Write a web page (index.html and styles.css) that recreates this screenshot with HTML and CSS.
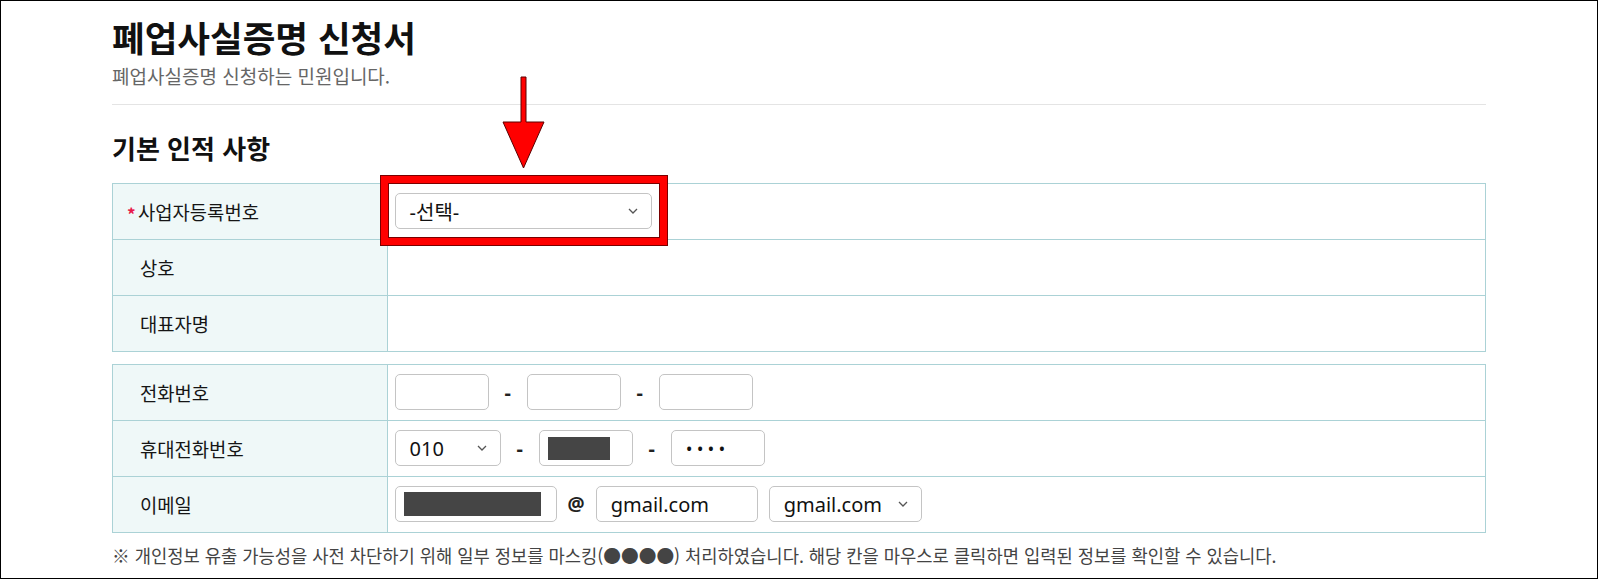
FILE: index.html
```html
<!DOCTYPE html>
<html lang="ko">
<head>
<meta charset="utf-8">
<title>폐업사실증명 신청서</title>
<link rel="stylesheet" href="styles.css">
</head>
<body>
<div class="frame">
  <div class="page">
    <h1 class="title">폐업사실증명 신청서</h1>
    <p class="desc">폐업사실증명 신청하는 민원입니다.</p>
    <hr class="rule">
    <h2 class="section">기본 인적 사항</h2>

    <table class="form-table">
      <tr>
        <th class="label"><span class="req">*</span>사업자등록번호</th>
        <td class="value">
          <div class="inline">
            <div class="field select w-biz"><span>-선택-</span><svg class="chev" viewBox="0 0 10 6"><path d="M1 1 L5 5 L9 1"/></svg></div>
          </div>
        </td>
      </tr>
      <tr>
        <th class="label">상호</th>
        <td class="value"><div class="inline"></div></td>
      </tr>
      <tr>
        <th class="label">대표자명</th>
        <td class="value"><div class="inline"></div></td>
      </tr>
    </table>

    <table class="form-table second">
      <tr>
        <th class="label">전화번호</th>
        <td class="value">
          <div class="inline">
            <div class="field w-tel"></div>
            <span class="dash">-</span>
            <div class="field w-tel"></div>
            <span class="dash">-</span>
            <div class="field w-tel"></div>
          </div>
        </td>
      </tr>
      <tr>
        <th class="label">휴대전화번호</th>
        <td class="value">
          <div class="inline">
            <div class="field select w-mob"><span>010</span><svg class="chev" viewBox="0 0 10 6"><path d="M1 1 L5 5 L9 1"/></svg></div>
            <span class="dash">-</span>
            <div class="field masked w-tel"><span class="mask mask-mid"></span></div>
            <span class="dash">-</span>
            <div class="field w-tel"><span class="dots">••••</span></div>
          </div>
        </td>
      </tr>
      <tr>
        <th class="label">이메일</th>
        <td class="value">
          <div class="inline email">
            <div class="field masked w-mail"><span class="mask mask-mail"></span></div>
            <span class="at">@</span>
            <div class="field w-mail"><span>gmail.com</span></div>
            <div class="field select w-msel"><span>gmail.com</span><svg class="chev" viewBox="0 0 10 6"><path d="M1 1 L5 5 L9 1"/></svg></div>
          </div>
        </td>
      </tr>
    </table>

    <p class="note">※ 개인정보 유출 가능성을 사전 차단하기 위해 일부 정보를 마스킹(●●●●) 처리하였습니다. 해당 칸을 마우스로 클릭하면 입력된 정보를 확인할 수 있습니다.</p>
  </div>

  <div class="highlight"></div>
  <svg class="arrow" viewBox="0 0 48 98" width="48" height="98">
    <polygon points="21,3 26,3 26,48 44,48 23.5,94 3,48 21,48"/>
  </svg>
</div>
</body>
</html>
```

FILE: styles.css
```css
* { box-sizing: border-box; }

html, body {
  margin: 0;
  padding: 0;
  background: #ffffff;
}

body {
  font-family: "Noto Sans CJK KR", "Noto Sans", sans-serif;
  color: #111;
}

.frame {
  position: relative;
  width: 1598px;
  height: 579px;
  border: 1px solid #000;
  overflow: hidden;
  background: #fff;
}

.page {
  width: 1374px;
  margin: 0 auto;
  padding-top: 16px;
}

.title {
  margin: 0;
  font-size: 35.5px;
  line-height: 40px;
  font-weight: 700;
  color: #111;
}

.desc {
  margin: 7px 0 0;
  font-size: 19px;
  line-height: 24px;
  color: #666;
}

.rule {
  margin: 16px 0 0;
  border: 0;
  border-top: 1px solid #e4e4e4;
  height: 0;
}

.section {
  margin: 27px 0 0;
  font-size: 26px;
  line-height: 32px;
  font-weight: 700;
  color: #111;
}

.form-table {
  width: 100%;
  margin-top: 19px;
  border-collapse: collapse;
  border: 1px solid #abd2d6;
}

.form-table.second {
  margin-top: 12px;
}

.form-table th,
.form-table td {
  border: 1px solid #abd2d6;
}

.label {
  width: 20%;
  background: #eff8f8;
  text-align: left;
  font-weight: 400;
  font-size: 18.8px;
  color: #151515;
  padding: 0 0 0 27px;
  vertical-align: middle;
}

.req {
  display: inline-block;
  width: 11px;
  margin-left: -13px;
  color: #e8194b;
  font-size: 17px;
  font-weight: 700;
  vertical-align: -1px;
}

.value {
  padding: 9px 8px 10px 7px;
  vertical-align: middle;
}

.inline {
  display: flex;
  align-items: center;
  gap: 15px;
  min-height: 36px;
}

.inline.email {
  gap: 11px;
}

.field {
  display: flex;
  align-items: center;
  height: 36px;
  border: 1px solid #c4c4c4;
  border-radius: 5px;
  padding: 0 14px;
  font-family: "Noto Sans", "Noto Sans CJK KR", sans-serif;
  font-size: 20px;
  color: #111;
  background: #fff;
}

.field.select {
  justify-content: space-between;
  padding-right: 13px;
}

.field.masked {
  padding: 0 8px;
}

.w-biz { width: 257px; }
.w-tel { width: 94px; }
.w-mob { width: 106px; }
.w-mail { width: 162px; }
.w-msel { width: 153px; }

.chev {
  flex: none;
  width: 10px;
  height: 6px;
  fill: none;
  stroke: #555;
  stroke-width: 1.3;
}

.dash {
  font-family: "Noto Sans", sans-serif;
  font-size: 20px;
  font-weight: 700;
  color: #222;
  width: 8px;
  text-align: center;
}

.at {
  font-family: "Noto Sans", sans-serif;
  font-size: 19px;
  font-weight: 700;
  color: #222;
}

.mask {
  display: inline-block;
  background: #454545;
}

.mask-mid {
  width: 62px;
  height: 23px;
}

.mask-mail {
  width: 137px;
  height: 24px;
}

.dots {
  font-size: 14px;
  letter-spacing: 5.6px;
  padding-left: 1px;
  font-weight: 700;
}

.note {
  margin: 10px 0 0;
  font-size: 17.7px;
  line-height: 24px;
  color: #444;
}

.highlight {
  position: absolute;
  left: 380px;
  top: 175px;
  width: 286px;
  height: 69px;
  border: 7px solid #ff0000;
  box-shadow: 0 0 0 1px #7a0000, inset 0 0 0 1px #7a0000;
}

.arrow {
  position: absolute;
  left: 499px;
  top: 73px;
}

.arrow polygon {
  fill: #ff0000;
  stroke: #5a0000;
  stroke-width: 1;
}
```
